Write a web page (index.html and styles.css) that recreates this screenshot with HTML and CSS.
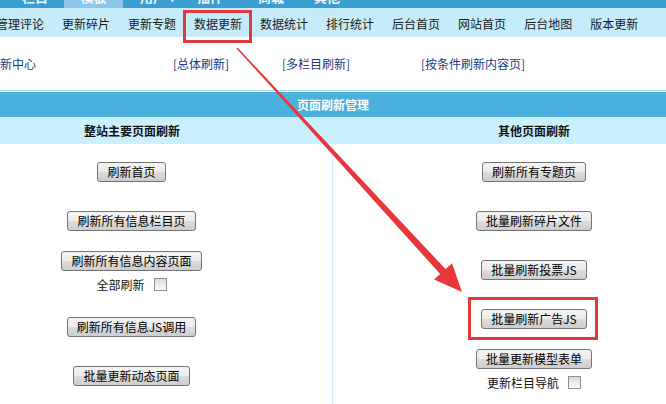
FILE: index.html
```html
<!DOCTYPE html>
<html lang="zh-CN">
<head>
    <meta charset="UTF-8">
    <title>数据更新</title>
    <link rel="stylesheet" href="styles.css">
</head>
<body>
    <div class="page">
        <div class="topbar">
            <span class="tab tab-a">栏目</span>
            <span class="tab tab-b active">模板</span>
            <span class="tab tab-c">用户 ▾</span>
            <span class="tab tab-d">插件</span>
            <span class="tab tab-e">商城</span>
            <span class="tab tab-f">其他</span>
        </div>

        <div class="nav">
            <span>管理评论</span>
            <span>更新碎片</span>
            <span>更新专题</span>
            <span>数据更新</span>
            <span>数据统计</span>
            <span>排行统计</span>
            <span>后台首页</span>
            <span>网站首页</span>
            <span>后台地图</span>
            <span>版本更新</span>
        </div>

        <div class="links">
            <span class="plain">刷新中心</span>
            <a>[总体刷新]</a>
            <a>[多栏目刷新]</a>
            <a>[按条件刷新内容页]</a>
        </div>

        <div class="panel">
            <div class="panel-title">页面刷新管理</div>
            <div class="cols">
                <div class="col">
                    <div class="col-head">整站主要页面刷新</div>
                    <div class="col-body left">
                        <button class="btn">刷新首页</button>
                        <button class="btn gap-l">刷新所有信息栏目页</button>
                        <button class="btn gap-s">刷新所有信息内容页面</button>
                        <label class="check">全部刷新<input type="checkbox"></label>
                        <button class="btn gap-s">刷新所有信息JS调用</button>
                        <button class="btn gap-l">批量更新动态页面</button>
                    </div>
                </div>
                <div class="col">
                    <div class="col-head">其他页面刷新</div>
                    <div class="col-body">
                        <button class="btn">刷新所有专题页</button>
                        <button class="btn gap-l">批量刷新碎片文件</button>
                        <button class="btn gap-l">批量刷新投票JS</button>
                        <button class="btn gap-l">批量刷新广告JS</button>
                        <button class="btn gap-s">批量更新模型表单</button>
                        <label class="check">更新栏目导航<input type="checkbox"></label>
                    </div>
                </div>
            </div>
        </div>

        <!-- annotations drawn over the screenshot -->
        <div class="mark mark-nav"></div>
        <div class="mark mark-btn"></div>
        <svg class="arrow" width="666" height="404" viewBox="0 0 666 404">
            <polygon points="236.5,48.5 237.5,47.5 446,269.6 440.4,274.2" fill="#e8373c"/>
            <polygon points="434,279.6 452,263.2 462,292" fill="#e8373c"/>
        </svg>
    </div>
</body>
</html>
```

FILE: styles.css
```css
body {
    margin: 0;
    background-color: #fff;
    font-family: "Noto Sans CJK SC", "Noto Sans", sans-serif;
    font-size: 12px;
    color: #111;
}
.page {
    position: relative;
    width: 666px;
    height: 404px;
    overflow: hidden;
}
.topbar {
    position: relative;
    height: 8px;
    background-color: #3a9ed1;
    overflow: hidden;
}
.tab {
    position: absolute;
    top: -11px;
    height: 19px;
    line-height: 15px;
    font-size: 13px;
    font-weight: bold;
    color: #f4f9fc;
}
.tab.active {
    background-color: #8cc6ea;
    width: 59px;
    text-align: center;
}
.tab-a { left: 22px; }
.tab-b { left: 64px; }
.tab-c { left: 140px; }
.tab-d { left: 197px; }
.tab-e { left: 258px; }
.tab-f { left: 314px; }
.nav {
    display: flex;
    gap: 18px;
    height: 29px;
    line-height: 31px;
    margin-left: -4px;
    background-color: #c6ecf9;
    white-space: nowrap;
    color: #1a1a1a;
}
.links {
    display: grid;
    grid-template-columns: 185px 109px 139px auto;
    height: 53px;
    line-height: 53px;
    margin-left: -12px;
    color: #22397f;
    white-space: nowrap;
}
.panel {
    border-top: 1px solid #a8d8ee;
    padding-top: 1px;
}
.panel-title {
    width: 804px;
    margin-left: -69px;
    height: 25px;
    line-height: 25px;
    text-align: center;
    background-color: #4db1dd;
    color: #fff;
    font-weight: bold;
}
.cols {
    display: grid;
    grid-template-columns: 1fr 1fr;
    width: 804px;
    margin-left: -69px;
}
.col-head {
    height: 27px;
    line-height: 27px;
    text-align: center;
    font-weight: bold;
    background-color: #c9f0fc;
}
.col-body {
    display: flex;
    flex-direction: column;
    align-items: center;
    padding-top: 18px;
    height: 300px;
}
.col-body.left {
    border-right: 1px solid #d2eef8;
}
.btn {
    box-sizing: border-box;
    height: 20px;
    padding: 0 9px;
    font-family: inherit;
    font-size: 12px;
    line-height: 18px;
    color: #000;
    border: 1px solid #747474;
    border-radius: 3px;
    background: linear-gradient(#f4f4f4, #ececec 48%, #dcdcdc 52%, #cdcdcd);
}
.gap-l {
    margin-top: 29px;
}
.gap-s {
    margin-top: 20px;
}
.check {
    display: flex;
    align-items: center;
    height: 26px;
}
.check input {
    appearance: none;
    width: 13px;
    height: 13px;
    margin: 0 0 0 9px;
    border: 1px solid #8e8f8f;
    background: linear-gradient(#dcdcdc, #fbfbfb);
}
.mark {
    position: absolute;
    border: 3px solid #e2393f;
}
.mark-nav {
    left: 183px;
    top: 10px;
    width: 63px;
    height: 27px;
}
.mark-btn {
    left: 468px;
    top: 297px;
    width: 124px;
    height: 37px;
}
.arrow {
    position: absolute;
    left: 0;
    top: 0;
    pointer-events: none;
}
```
